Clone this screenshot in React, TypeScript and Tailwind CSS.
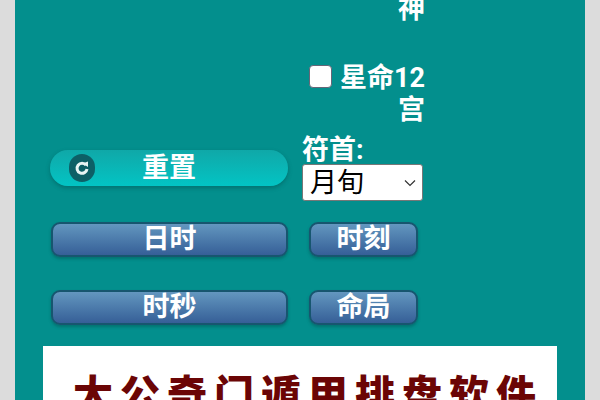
const cjk = "font-['Roboto','Noto_Sans_CJK_SC',sans-serif]";

function BlueButton({ label, wide }: { label: string; wide?: boolean }) {
  return (
    <button
      className={`${wide ? "w-[237px]" : "w-[109px]"} h-[35px] rounded-[9px] border-2 border-[#17566f] bg-gradient-to-b from-[#6397bf] to-[#365f97] text-white text-[27px] font-bold leading-[29px] shadow-[0_2px_3px_rgba(0,60,60,0.35)]`}
    >
      {label}
    </button>
  );
}

export default function App() {
  return (
    <div className={`${cjk} w-[600px] h-[400px] overflow-hidden bg-[#dcdcdc] px-[15px]`}>
      <div className="h-[400px] w-[570px] bg-[#038f8d] text-white overflow-hidden pl-[35px] pr-[28px]">
        <div className="flex gap-[12px] h-[345px]">
          <div className="w-[240px] flex flex-col pt-[150px]">
            <button className="w-[238px] h-[36px] rounded-[18px] bg-gradient-to-b from-[#0fa8a8] to-[#02c4c4] flex items-center text-[27px] font-bold shadow-[0_2px_4px_rgba(0,70,70,0.4)]">
              <span className="ml-[19px] w-[26px] h-[28px] rounded-full bg-[#0d5f66] flex items-center justify-center">
                <svg width="18" height="18" viewBox="0 0 18 18" fill="none">
                  <path d="M13 6.2A5 5 0 1 0 14 10" stroke="#e8f4f4" strokeWidth="3" strokeLinecap="butt" />
                  <path d="M9.5 4.5 15 2.5V8z" fill="#e8f4f4" />
                </svg>
              </span>
              <span className="ml-[47px]">重置</span>
            </button>
            <div className="mt-[36px] ml-px"><BlueButton label="日时" wide /></div>
            <div className="mt-[33px] ml-px"><BlueButton label="时秒" wide /></div>
          </div>
          <div className="w-[125px] text-[27px] font-bold leading-[32px] relative">
            <div className="text-right -mt-[7px] w-[123px]">神</div>
            <div className="mt-[37px] flex justify-end flex-wrap w-[123px] text-right">
              <span className="inline-flex items-center whitespace-nowrap">
                <span className="w-[23px] h-[23px] -mt-[4px] rounded-[4px] bg-white border border-[#667] mr-[8px]" />
                星命12
              </span>
              <span className="w-full">宫</span>
            </div>
            <div className="mt-[10px] leading-[28px]">符首:</div>
            <div className="w-[121px] h-[37px] bg-white rounded-[3px] border border-[#777] text-black flex items-center pl-[7px] text-[27px] font-normal">
              月旬
              <svg className="ml-auto mr-[6px]" width="12" height="8" viewBox="0 0 12 8" fill="none">
                <path d="M1 1.5 6 6.5 11 1.5" stroke="#333" strokeWidth="1.2" />
              </svg>
            </div>
            <div className="mt-[21px] ml-[7px]"><BlueButton label="时刻" /></div>
            <div className="mt-[33px] ml-[7px]"><BlueButton label="命局" /></div>
          </div>
        </div>
        <div className="w-[514px] h-[80px] -ml-[7px] mt-px bg-white pl-[30px] pt-[22px]">
          <span className="text-[#6b0505] text-[40px] font-black leading-[48px] tracking-[7px] whitespace-nowrap font-['Noto_Sans_CJK_SC',sans-serif]">大公奇门遁甲排盘软件</span>
        </div>
      </div>
    </div>
  );
}
